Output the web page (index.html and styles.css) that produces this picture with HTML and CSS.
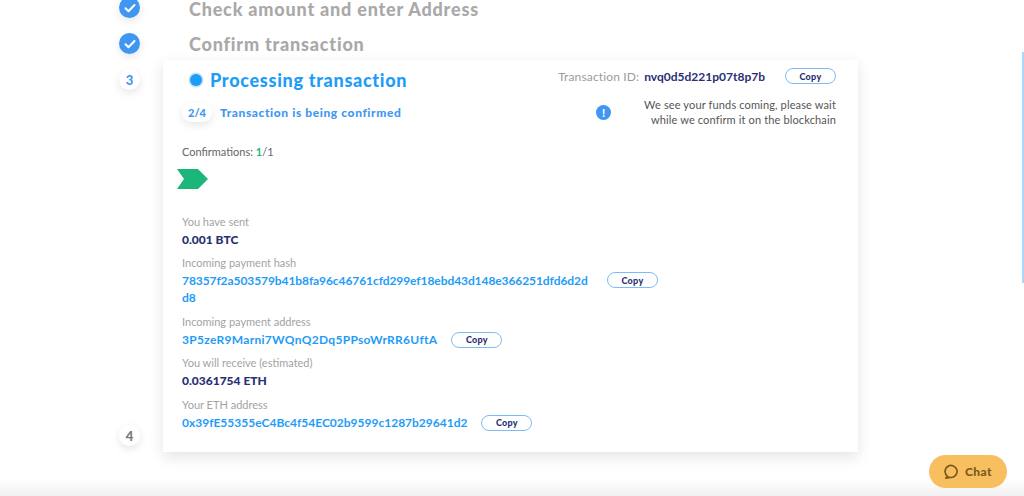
FILE: index.html
```html
<!DOCTYPE html>
<html>
<head>
  <meta charset="UTF-8">
  <title>Exchange status</title>
  <link rel="stylesheet" href="styles.css">
</head>
<body>
  <div class="page">
    <div class="rail">
      <span class="badge done">
        <svg width="12" height="12" viewBox="0 0 12 12"><path d="M1.5 6.3l3 3 6-6.3" fill="none" stroke="#fff" stroke-width="2" stroke-linecap="round" stroke-linejoin="round"/></svg>
      </span>
      <span class="badge done">
        <svg width="12" height="12" viewBox="0 0 12 12"><path d="M1.5 6.3l3 3 6-6.3" fill="none" stroke="#fff" stroke-width="2" stroke-linecap="round" stroke-linejoin="round"/></svg>
      </span>
      <span class="badge current">3</span>
      <span class="badge next">4</span>
    </div>

    <div class="main">
      <h2 class="step-title">Check amount and enter Address</h2>
      <h2 class="step-title">Confirm transaction</h2>

      <div class="card">
        <div class="card-head">
          <div class="processing">
            <span class="dot"></span>
            <h1>Processing transaction</h1>
          </div>
          <div class="tx-id">
            <span class="tx-label">Transaction ID:</span>
            <b>nvq0d5d221p07t8p7b</b>
            <button class="copy">Copy</button>
          </div>
        </div>

        <div class="status-row">
          <div class="status">
            <span class="pill">2/4</span>
            <span class="status-text">Transaction is being confirmed</span>
          </div>
          <div class="notice">
            <span class="alert">!</span>
            <p>We see your funds coming, please wait<br>while we confirm it on the blockchain</p>
          </div>
        </div>

        <div class="confirmations">Confirmations: <span class="green">1</span>/1</div>
        <svg class="chevron" width="31" height="20" viewBox="0 0 31 20"><path d="M0 0H21L31 10L21 20H0L7 10Z" fill="#1cb67a"/></svg>

        <div class="fields">
          <div class="field">
            <div class="label">You have sent</div>
            <div class="amount">0.001 BTC</div>
          </div>
          <div class="field">
            <div class="label">Incoming payment hash</div>
            <div class="value-row top">
              <div class="value hash">78357f2a503579b41b8fa96c46761cfd299ef18ebd43d148e366251dfd6d2dd8</div>
              <button class="copy">Copy</button>
            </div>
          </div>
          <div class="field">
            <div class="label">Incoming payment address</div>
            <div class="value-row">
              <div class="value address">3P5zeR9Marni7WQnQ2Dq5PPsoWrRR6UftA</div>
              <button class="copy">Copy</button>
            </div>
          </div>
          <div class="field">
            <div class="label">You will receive (estimated)</div>
            <div class="amount">0.0361754 ETH</div>
          </div>
          <div class="field">
            <div class="label">Your ETH address</div>
            <div class="value-row">
              <div class="value">0x39fE55355eC4Bc4f54EC02b9599c1287b29641d2</div>
              <button class="copy">Copy</button>
            </div>
          </div>
        </div>
      </div>
    </div>
  </div>

  <div class="bottom-fade"></div>
  <div class="scrollbar"></div>
  <button class="chat">
    <svg width="16" height="16" viewBox="0 0 16 16"><path d="M3.6 12.4A6 6 0 1 1 6 13.4L1.8 14.2Z" fill="none" stroke="#7a5a1e" stroke-width="1.7" stroke-linejoin="round"/></svg>
    Chat
  </button>
</body>
</html>
```

FILE: styles.css
```css
* {
  box-sizing: border-box;
}

html, body {
  height: 100%;
}

body {
  margin: 0;
  background: #fff;
  overflow: hidden;
  font-family: "Lato", "Open Sans", sans-serif;
  color: #555;
}

.page {
  display: flex;
  padding-left: 119px;
  margin-top: -3px;
}

.rail {
  width: 44px;
  display: flex;
  flex-direction: column;
}

.badge {
  width: 21px;
  height: 21px;
  border-radius: 50%;
  display: flex;
  align-items: center;
  justify-content: center;
  font-size: 13px;
  font-weight: 900;
  margin-bottom: 15px;
  box-shadow: 0 3px 8px rgba(0, 0, 0, .1);
}

.done {
  background: #3f97f2;
}

.current {
  background: #fff;
  color: #3f97f2;
}

.next {
  background: #fff;
  color: #777;
  margin-top: 320px;
}

.main {
  width: 695px;
}

.step-title {
  margin: 0 0 0 26px;
  height: 35px;
  line-height: 24px;
  font-size: 18px;
  font-weight: 900;
  letter-spacing: .8px;
  color: #a9a9a9;
}

.card {
  margin-top: -7px;
  height: 392px;
  padding: 10px 22px 0 19px;
  background: #fff;
  box-shadow: 0 5px 14px rgba(0, 0, 0, .11);
}

.card-head {
  display: flex;
  justify-content: space-between;
  align-items: center;
  height: 20px;
}

.processing {
  display: flex;
  align-items: center;
  gap: 8px;
  margin-left: 8px;
}

.dot {
  width: 12px;
  height: 12px;
  border-radius: 50%;
  background: #1e9cf8;
  box-shadow: 0 0 0 1.5px #c3e2fb;
}

h1 {
  margin: 0;
  font-size: 18px;
  font-weight: 900;
  letter-spacing: .7px;
  color: #1e9cf8;
}

.tx-id {
  display: flex;
  align-items: center;
  font-size: 12px;
  margin-top: -8px;
}

.tx-label {
  color: #9b9b9b;
  margin-right: 5px;
  letter-spacing: .15px;
}

.tx-id b {
  color: #2a2f73;
  margin-right: 20px;
}

.copy {
  width: 51px;
  height: 16px;
  padding: 0;
  background: #fff;
  border: 1px solid #7dbcf5;
  border-radius: 8px;
  font-family: inherit;
  font-size: 9px;
  font-weight: 900;
  letter-spacing: .3px;
  color: #2a2f73;
}

.status-row {
  display: flex;
  justify-content: space-between;
  margin-top: 5px;
}

.status {
  display: flex;
  align-items: center;
  gap: 8px;
  height: 26px;
  margin-top: 4px;
}

.pill {
  width: 30px;
  height: 19px;
  border-radius: 10px;
  background: #fff;
  display: flex;
  align-items: center;
  justify-content: center;
  font-size: 11px;
  font-weight: 900;
  color: #3f97f2;
  box-shadow: 0 3px 8px rgba(0, 0, 0, .1);
}

.status-text {
  font-size: 12px;
  font-weight: 900;
  letter-spacing: .6px;
  color: #3f97f2;
}

.notice {
  display: flex;
  align-items: center;
  margin-top: 2px;
}

.alert {
  width: 15px;
  height: 15px;
  margin-right: 1px;
  border-radius: 50%;
  background: #3f97f2;
  color: #fff;
  font-size: 11px;
  font-weight: 900;
  display: flex;
  align-items: center;
  justify-content: center;
}

.notice p {
  margin: 0;
  width: 224px;
  text-align: right;
  font-size: 11px;
  letter-spacing: .14px;
  line-height: 15px;
  color: #555;
}

.confirmations {
  margin-top: 18px;
  font-size: 11px;
  line-height: 14px;
  color: #666;
}

.green {
  color: #1cb67a;
  font-weight: 700;
}

.chevron {
  display: block;
  margin: 10px 0 0 -5px;
}

.fields {
  margin-top: 24px;
}

.field {
  margin-bottom: 6px;
}

.field:nth-child(2) {
  margin-bottom: 7px;
}

.field:nth-child(2) .label {
  margin-top: -1px;
}

.label {
  font-size: 11px;
  line-height: 18px;
  color: #a3a3a3;
}

.amount {
  font-size: 12px;
  font-weight: 900;
  line-height: 18px;
  color: #2a2f73;
}

.value-row {
  display: flex;
  align-items: center;
  gap: 14px;
}

.value-row.top {
  align-items: flex-start;
  gap: 15px;
}

.value {
  font-size: 12px;
  font-weight: 700;
  line-height: 17px;
  color: #1e9cf8;
}

.hash {
  width: 410px;
  letter-spacing: -.08px;
  word-break: break-all;
}

.address {
  letter-spacing: .3px;
}

.bottom-fade {
  position: fixed;
  left: 0;
  right: 0;
  bottom: 0;
  height: 18px;
  background: linear-gradient(#fff, #f1f1f1);
}

.scrollbar {
  position: fixed;
  top: 52px;
  right: 0;
  width: 2px;
  height: 231px;
  background: #a9d8fc;
}

.chat {
  position: fixed;
  right: 17px;
  bottom: 8px;
  width: 78px;
  height: 33px;
  display: flex;
  align-items: center;
  justify-content: center;
  gap: 5px;
  background: #f7bf5f;
  border: 0;
  border-radius: 17px;
  font-family: inherit;
  font-size: 12px;
  font-weight: 900;
  letter-spacing: .4px;
  color: #7a5a1e;
}
```
